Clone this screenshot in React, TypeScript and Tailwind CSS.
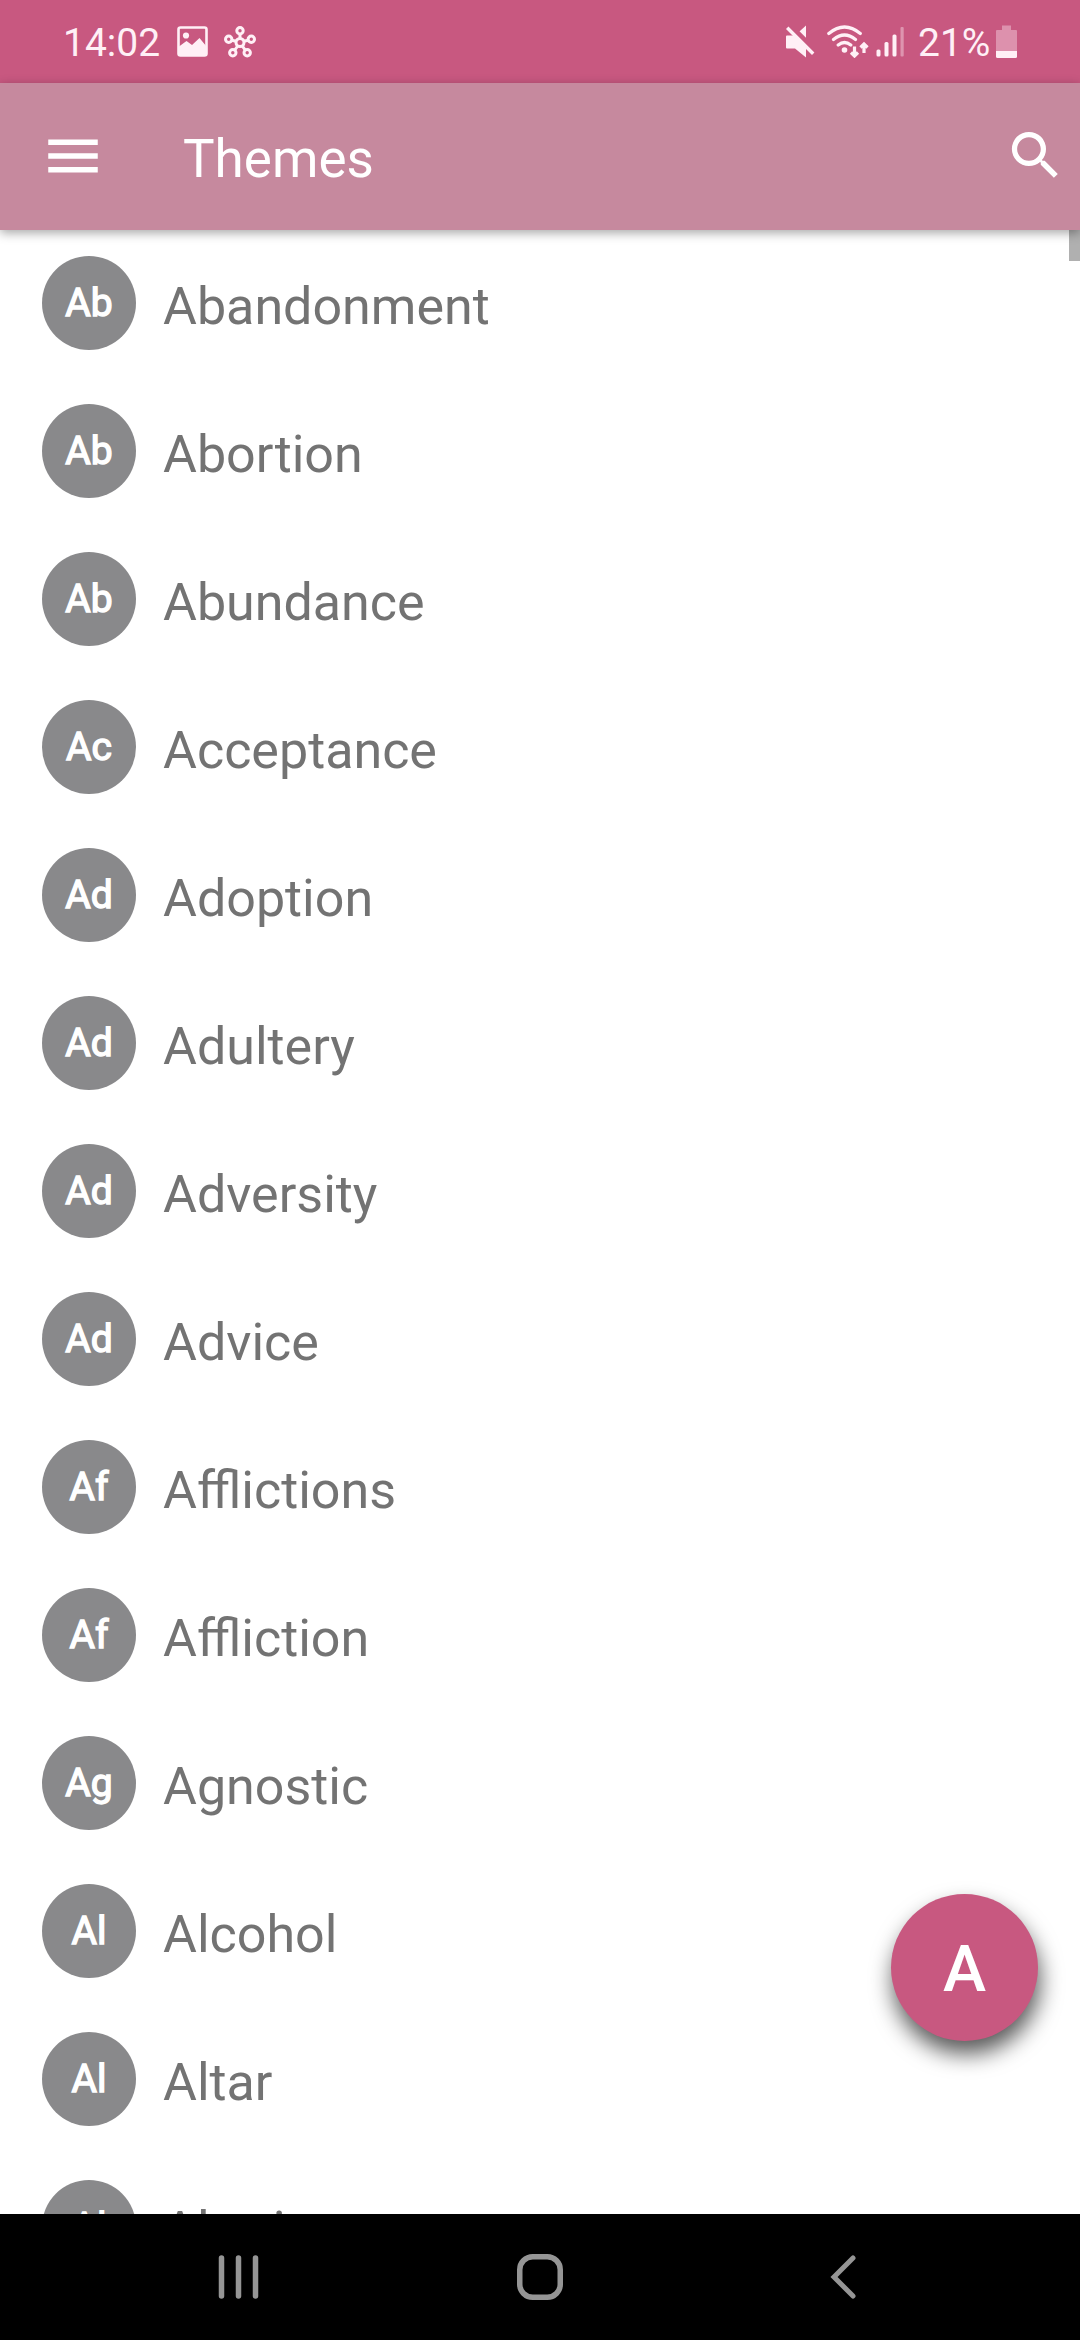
import { MdMenu, MdSearch } from "react-icons/md";

const themes = [
  "Abandonment",
  "Abortion",
  "Abundance",
  "Acceptance",
  "Adoption",
  "Adultery",
  "Adversity",
  "Advice",
  "Afflictions",
  "Affliction",
  "Agnostic",
  "Alcohol",
  "Altar",
  "Altruism",
];

const StatusBar = () => (
  <div className="flex h-[83px] shrink-0 items-center bg-[#c85880] pl-[63px] pr-[63px] text-[39px] leading-none text-[#fff0f6]">
    <span className="w-[114px] pt-[4px]">14:02</span>
    <svg width="31" height="31" viewBox="0 0 31 31">
      <rect x="1.5" y="1.5" width="28" height="28" rx="2" fill="none" stroke="currentColor" strokeWidth="2.6" />
      <circle cx="9" cy="9.5" r="3.1" fill="currentColor" />
      <path d="M2 20.5l7.500-5.500 5.500 4 7.500-7 7 8.500V29H2z" fill="currentColor" />
    </svg>
    <svg className="ml-4" width="32" height="32" viewBox="0 0 32 32" fill="none" stroke="currentColor" strokeWidth="3">
      <circle cx="16" cy="16.500" r="4" />
      <circle cx="16" cy="4.700" r="3.200" />
      <circle cx="4.700" cy="13.300" r="3.200" />
      <circle cx="27.300" cy="13.300" r="3.200" />
      <circle cx="8.800" cy="26.800" r="3.200" />
      <circle cx="23.200" cy="26.800" r="3.200" />
      <path d="M16 8v4.500M7.700 14.200l4.500 1.100M24.300 14.200l-4.500 1.100M10.700 24.200l3-4.200M21.300 24.200l-3-4.200" />
    </svg>
    <div className="ml-auto flex items-center">
      <svg width="30" height="33" viewBox="0 0 30 33">
        <path d="M2 10.500h8L21 0.500V32.500l-11-9H2a1 1 0 0 1-1-1v-11a1 1 0 0 1 1-1z" fill="currentColor" />
        <path d="M4 0l27 27" stroke="#c85880" strokeWidth="6" />
        <path d="M2.200 2.700l26 26" stroke="currentColor" strokeWidth="3.400" />
      </svg>
      <svg className="ml-3" width="42" height="33" viewBox="0 0 42 33" fill="none" stroke="currentColor" strokeWidth="3.200" strokeLinecap="round">
        <path d="M1.800 8.500q15.700-13 31.500 0M6.500 14.500q11-9 22 0M11.200 20q6.300-5 12.600 0" />
        <circle cx="17.500" cy="25" r="2.800" fill="currentColor" stroke="none" />
        <path d="M27.500 21.500v9M24 27.500l3.500 3.500 3.500-3.500M37 28v-8.500M33.500 22.500l3.500-3.500 3.500 3.500" strokeLinecap="butt" />
      </svg>
      <svg className="ml-[7px]" width="28" height="31" viewBox="0 0 28 31" fill="currentColor">
        <rect x="0.500" y="23.500" width="4" height="7" rx="1.500" />
        <rect x="8.500" y="16" width="4" height="14.500" rx="1.500" />
        <rect x="16.500" y="8.500" width="4" height="22" rx="1.500" />
        <rect x="24.500" y="1" width="3.200" height="29.500" rx="1" opacity="0.4" />
      </svg>
      <span className="ml-[14px] w-[78px] whitespace-nowrap pt-[4px]">21%</span>
      <svg width="21" height="33" viewBox="0 0 21 33" fill="currentColor">
        <path d="M6 0.500h9v4.500h5a1 1 0 0 1 1 1V26H0V6a1 1 0 0 1 1-1h5z" opacity="0.38" />
        <path d="M0 26h21v5.500a1.500 1.500 0 0 1-1.500 1.500h-18a1.500 1.500 0 0 1-1.500-1.500z" />
      </svg>
    </div>
  </div>
);

const AppBar = () => (
  <header className="z-10 flex h-[147px] shrink-0 items-center bg-[#c6899e] pb-[2px] pl-10 pr-[13px] text-white shadow-[0_3px_10px_rgba(0,0,0,0.35)]">
    <MdMenu size={66} />
    <h1 className="ml-[77px] pt-[7px] text-[53px] leading-none">Themes</h1>
    <MdSearch className="ml-auto" size={63} />
  </header>
);

const ThemeRow = ({ name }: { name: string }) => (
  <li className="flex h-[148px] shrink-0 items-start pl-[42px]">
    <div className="flex size-[94px] items-center justify-center rounded-full bg-[#89898b] text-[39px] leading-none text-white [-webkit-text-stroke:1.4px_white]">
      {name.slice(0, 2)}
    </div>
    <span className="ml-[27px] pt-[4px] text-[52px] leading-[94px] text-[#737373]">{name}</span>
  </li>
);

const NavigationBar = () => (
  <nav className="flex h-[126px] shrink-0 items-center bg-black pl-[218px] text-[#959595]">
    <svg width="42" height="44" viewBox="0 0 42 44" stroke="currentColor" strokeWidth="5.500" strokeLinecap="round">
      <path d="M3.500 3v38M20.500 3v38M37.500 3v38" />
    </svg>
    <svg className="ml-[257px]" width="46" height="46" viewBox="0 0 46 46" fill="none" stroke="currentColor" strokeWidth="5.500">
      <rect x="2.750" y="2.750" width="40.500" height="40.500" rx="13" />
    </svg>
    <svg className="ml-[267px]" width="26" height="44" viewBox="0 0 26 44" fill="none" stroke="currentColor" strokeWidth="5" strokeLinecap="round">
      <path d="M23 3L4 22l19 19" />
    </svg>
  </nav>
);

export default function App() {
  return (
    <div className="flex h-[2340px] w-[1080px] flex-col overflow-hidden bg-white font-[Roboto,sans-serif]">
      <StatusBar />
      <AppBar />
      <main className="relative min-h-0 flex-1 overflow-hidden">
        <ul className="flex flex-col pt-[26px]">
          {themes.map((name) => (
            <ThemeRow key={name} name={name} />
          ))}
        </ul>
        {/* Scroll thumb */}
        <div className="absolute right-0 top-0 h-[31px] w-[11px] bg-[#b0b0b0]" />
        <button className="absolute bottom-[173px] right-[42px] flex size-[147px] items-center justify-center rounded-full bg-[#c85880] pt-1 text-[65px] font-medium leading-none text-white shadow-[2px_13px_22px_rgba(0,0,0,0.65)]">
          A
        </button>
      </main>
      <NavigationBar />
    </div>
  );
}
